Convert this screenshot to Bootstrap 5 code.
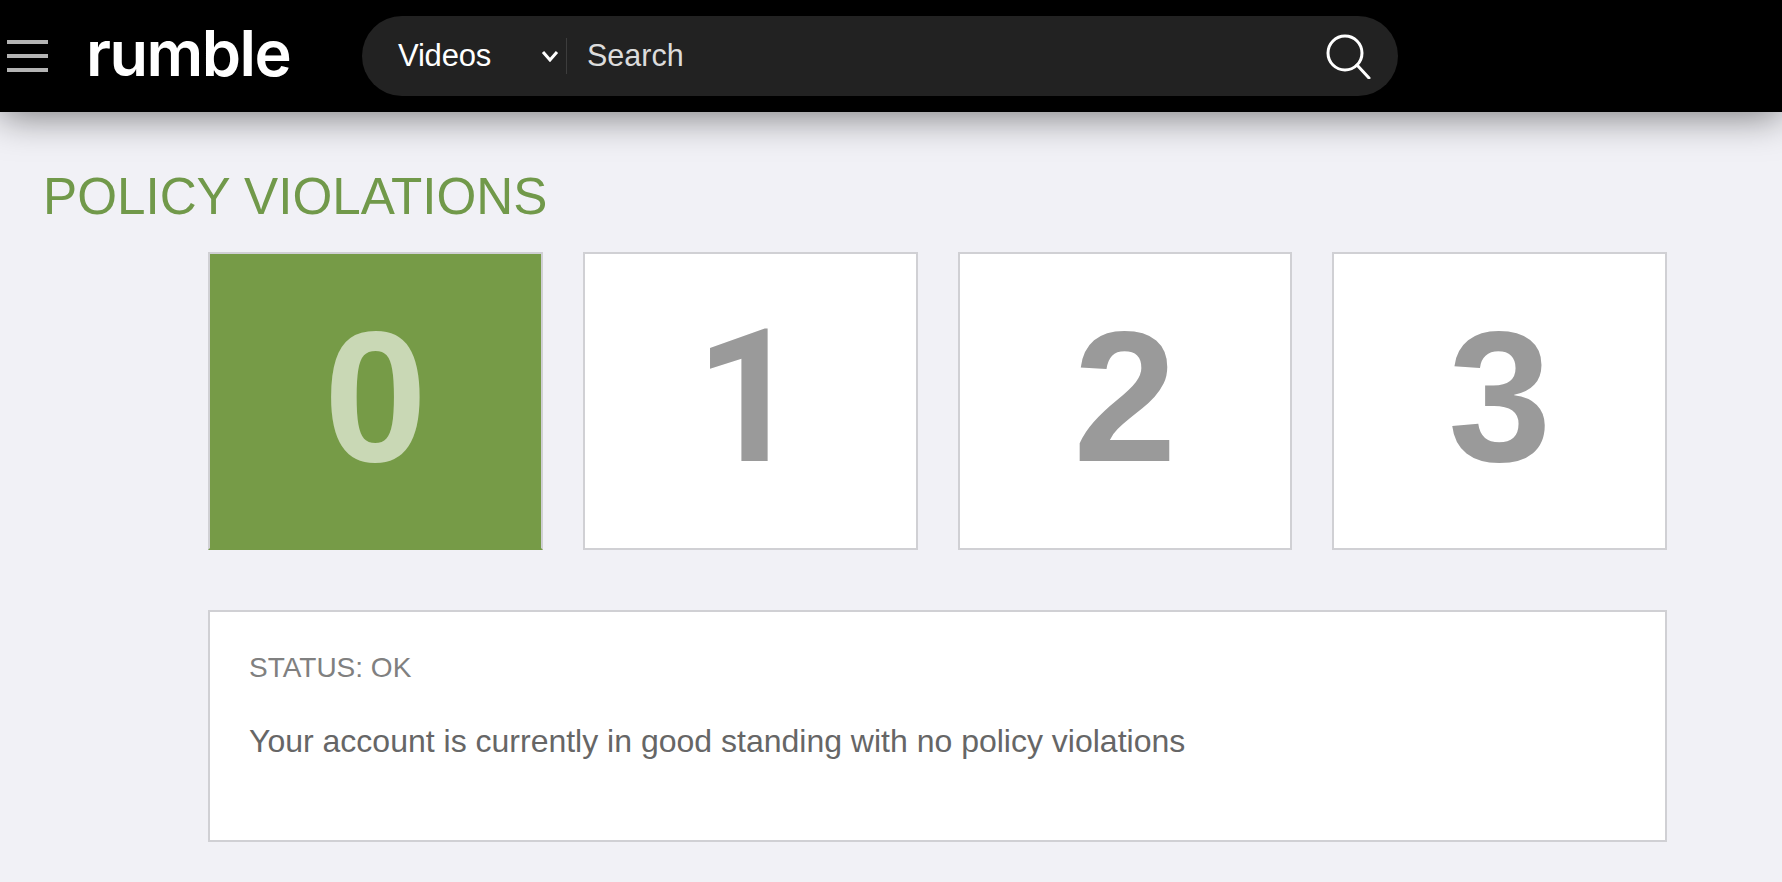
<!DOCTYPE html>
<html lang="en">
  <head>
    <title>Policy Violations</title>
    <link href="https://cdn.jsdelivr.net/npm/bootstrap@5.3.3/dist/css/bootstrap.min.css" rel="stylesheet" />
    <style>
      body { background: #f1f1f6; font-family: "Liberation Sans", Arial, sans-serif; overflow: hidden; }
      .top-bar { background: #000; height: 112px; box-shadow: 0 4px 38px rgba(0, 0, 0, .5); padding-left: 7px; }
      .burger { width: 41px; gap: 10px; margin-right: 38px; flex-shrink: 0; }
      .burger span { height: 4px; background: #b4b4b4; }
      .brand-word { width: 276px; flex-shrink: 0; color: #fff; font-family: Inter, sans-serif; font-weight: 600; font-size: 63px; line-height: 1; letter-spacing: -1.5px; padding-bottom: 6px; text-decoration: none; }
      .search-pill { width: 1036px; flex-shrink: 0; height: 80px; background: #222; border-radius: 40px; padding: 0 27px 0 36px; }
      .search-type { width: 169px; color: #fff; font-size: 31px; letter-spacing: -.2px; border-right: 1px solid #3d3d3d; height: 36px; padding-right: 7px; }
      .search-box { background: transparent; border: 0; outline: 0; font-size: 30.5px; padding: 0 0 0 20px; color: #ddd; }
      .search-box::placeholder { color: #dcdcdc; opacity: 1; }
      .search-go { background: none; border: 0; padding: 0; line-height: 0; }
      .page-title { color: #71994a; font-size: 51.2px; line-height: 60px; font-weight: 400; margin: 55px 0 0 43px; }
      .page-body { padding: 25px 115px 0 208px; }
      .level-row { --bs-gutter-x: 40px; }
      .level-box { height: 298px; background: #fff; border: 2px solid #d0d0d4; font-size: 186px; line-height: 1; font-weight: 700; color: #9a9a9a; padding-bottom: 8px; }
      .level-box.is-current { background: #769b47; color: #c9d8b5; border-bottom-color: #769b47; }
      .digit-one { font-family: Roboto, sans-serif; padding-right: 4px; }
      .status-box { background: #fff; border: 2px solid #d0d0d4; height: 232px; margin-top: 60px; padding: 39px 39px; }
      .status-label { color: #808080; font-size: 28px; line-height: 34px; margin-bottom: 37px; }
      .status-text { color: #666; font-size: 32px; line-height: 38px; }
    </style>
  </head>
  <body>
    <!-- Header -->
    <header class="top-bar d-flex align-items-center">
      <div class="burger d-flex flex-column"><span></span><span></span><span></span></div>
      <a class="brand-word" href="#">rumble</a>
      <form class="search-pill d-flex align-items-center">
        <div class="search-type d-flex align-items-center justify-content-between">
          <span>Videos</span>
          <svg width="18" height="12" viewBox="0 0 18 12"><path d="M2 2l7 8 7-8" fill="none" stroke="#fff" stroke-width="3" /></svg>
        </div>
        <input class="search-box flex-fill" type="text" placeholder="Search" />
        <button class="search-go" type="button">
          <svg width="46" height="46" viewBox="0 0 46 46"><circle cx="20" cy="20" r="17" fill="none" stroke="#fff" stroke-width="3" /><path d="M32 32l12 13" fill="none" stroke="#fff" stroke-width="3" stroke-linecap="round" /></svg>
        </button>
      </form>
    </header>

    <h1 class="page-title">POLICY VIOLATIONS</h1>

    <main class="page-body">
      <!-- Violation levels -->
      <div class="row level-row">
        <div class="col-3"><div class="level-box is-current d-flex align-items-center justify-content-center">0</div></div>
        <div class="col-3"><div class="level-box digit-one d-flex align-items-center justify-content-center">1</div></div>
        <div class="col-3"><div class="level-box d-flex align-items-center justify-content-center">2</div></div>
        <div class="col-3"><div class="level-box d-flex align-items-center justify-content-center">3</div></div>
      </div>

      <!-- Status -->
      <div class="status-box">
        <div class="status-label">STATUS: OK</div>
        <div class="status-text">Your account is currently in good standing with no policy violations</div>
      </div>
    </main>

    <script src="https://cdn.jsdelivr.net/npm/bootstrap@5.3.3/dist/js/bootstrap.bundle.min.js"></script>
  </body>
</html>
